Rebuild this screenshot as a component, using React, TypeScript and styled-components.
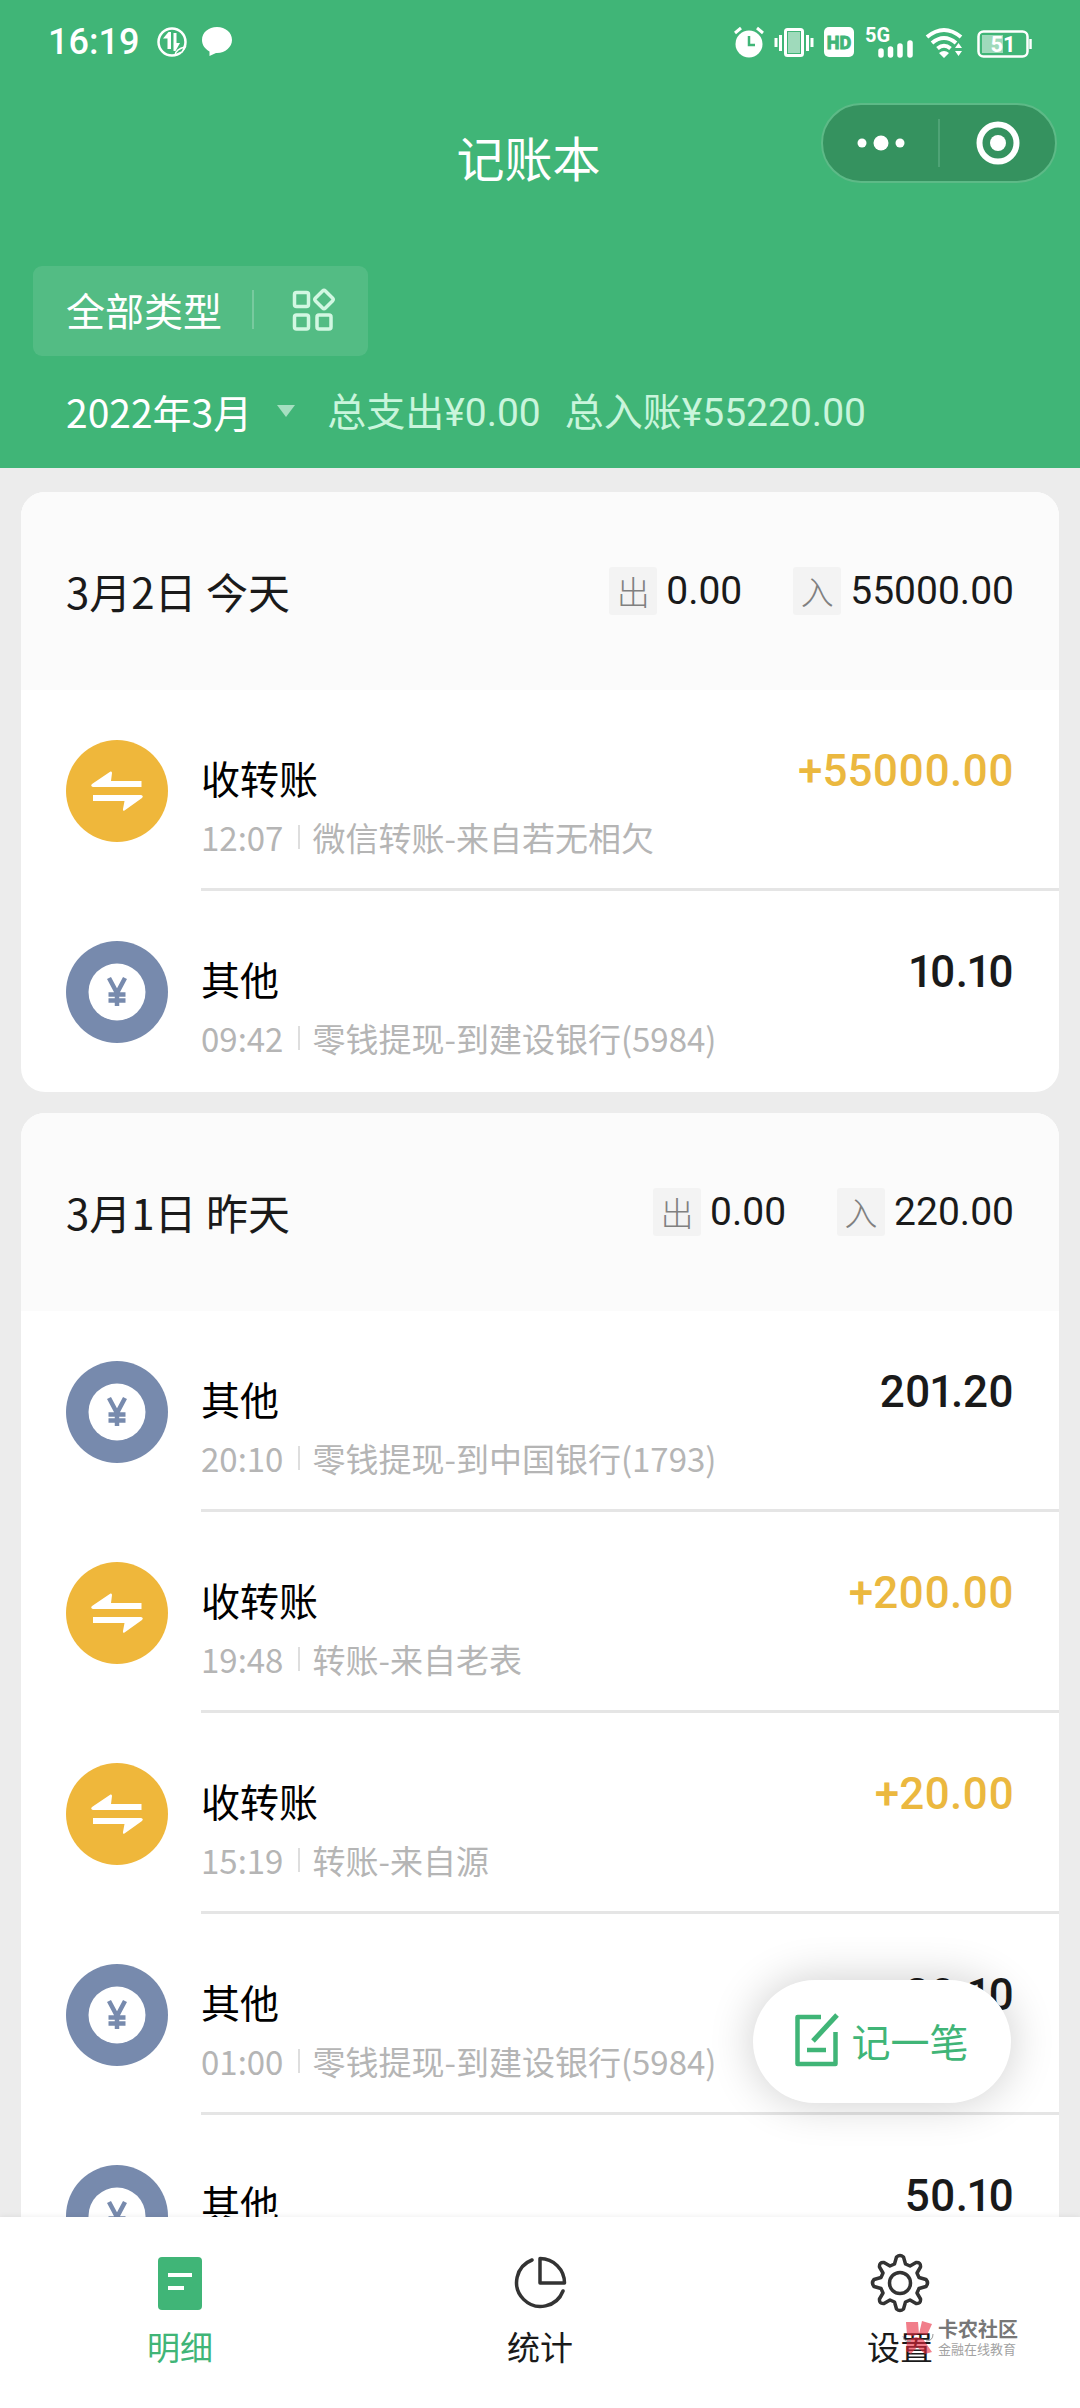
import React from "react";
import styled, { createGlobalStyle } from "styled-components";

const cjk = '"Noto Sans CJK SC", sans-serif';
const numeric = 'Roboto, "Noto Sans CJK SC", sans-serif';
const green = "#40b577";

const GlobalStyle = createGlobalStyle`
  *, *::before, *::after { box-sizing: border-box; }
  html, body { margin: 0; height: 100%; }
  #root { height: 100%; }
  body { background: #ececec; font-family: ${cjk}; color: #1a1a1a; }
  button { border: 0; padding: 0; background: none; font: inherit; color: inherit; }
  h1, h2, h3, p, ul { margin: 0; padding: 0; font-weight: inherit; }
  ul { list-style: none; }
  svg { display: block; flex: none; overflow: visible; }
`;

const Screen = styled.div`
  position: relative;
  display: flex;
  flex-direction: column;
  height: 100vh;
  overflow: hidden;
`;

const Header = styled.header`
  flex: none;
  background: ${green};
  color: #fff;
  padding-bottom: 26px;
`;

const StatusBar = styled.div`
  display: flex;
  justify-content: space-between;
  align-items: center;
  height: 84px;
  padding: 0 48px;
`;

const StatusGroup = styled.div`
  display: flex;
  align-items: center;
  gap: 18px;
`;

const Clock = styled.time`
  font: 500 36px/1 ${numeric};
`;

const NavBar = styled.div`
  display: grid;
  grid-template-columns: 1fr auto 1fr;
  align-items: center;
  height: 118px;
  padding: 0 23px 0 0;
`;

const Title = styled.h1`
  grid-column: 2;
  padding-top: 26px;
  font-size: 48px;
  line-height: 64px;
`;

const Capsule = styled.div`
  grid-column: 3;
  justify-self: end;
  display: flex;
  align-items: center;
  width: 236px;
  height: 80px;
  border: 2px solid #5dba87;
  border-radius: 40px;
  background: #35925f;
`;

const CapsuleButton = styled.button`
  flex: 1;
  display: flex;
  justify-content: center;
  align-items: center;
  height: 48px;
  & + & { border-left: 2px solid #4fa376; }
`;

const Filter = styled.button`
  display: flex;
  align-items: center;
  height: 90px;
  margin: 64px 0 0 33px;
  padding: 0 34px 3px 33px;
  border-radius: 9px;
  background: rgba(255, 255, 255, 0.1);
  font-size: 39px;
  line-height: 57px;
`;

const FilterRule = styled.span`
  width: 2px;
  height: 39px;
  margin: 0 38px 0 30px;
  background: rgba(255, 255, 255, 0.22);
`;

const Summary = styled.div`
  display: flex;
  align-items: flex-start;
  margin-top: 28px;
  padding: 0 66px;
  font-size: 39px;
  line-height: 58px;
`;

const MonthButton = styled.button`
  display: flex;
  align-items: center;
  gap: 25px;
  margin-right: 32px;
  line-height: 54px;
`;

const Total = styled.p`
  margin-right: 24px;
  font-family: ${numeric};
  color: #c9f5dc;
`;

const List = styled.main`
  flex: 1;
  min-height: 0;
  overflow: hidden;
  display: flex;
  flex-direction: column;
  gap: 21px;
  padding: 24px 21px 0;
`;

const Card = styled.section`
  flex: none;
  border-radius: 24px;
  background: #fff;
  overflow: hidden;
`;

const DayHeader = styled.div`
  display: flex;
  align-items: center;
  height: 198px;
  padding: 0 45px;
  background: #fbfbfb;
`;

const Day = styled.h2`
  flex: 1;
  font-size: 42px;
  line-height: 60px;
`;

const Flow = styled.p`
  display: flex;
  align-items: center;
  gap: 9px;
  margin-left: 51px;
  font: 400 39px/48px ${numeric};
`;

const Chip = styled.span`
  width: 48px;
  height: 48px;
  border-radius: 3px;
  background: #f3f3f3;
  color: #808080;
  font: 300 33px/48px ${cjk};
  text-align: center;
`;

const Row = styled.li`
  display: flex;
  gap: 33px;
  height: 201px;
  padding-left: 45px;
`;

const RowIcon = styled.svg`
  width: 102px;
  height: 102px;
  margin-top: 50px;
`;

const RowBody = styled.div`
  flex: 1;
  display: flex;
  justify-content: space-between;
  padding-right: 45px;
  border-bottom: 3px solid #e5e5e5;
  ${Row}:last-child & { border-bottom-color: transparent; }
`;

const RowTitle = styled.h3`
  padding-top: 58px;
  color: #000;
  font-size: 39px;
  line-height: 58px;
`;

const Detail = styled.p`
  display: flex;
  align-items: center;
  margin-top: 7px;
  color: #b5b5b5;
  font-size: 33px;
  line-height: 48px;
`;

const DetailRule = styled.span`
  width: 2px;
  height: 24px;
  margin: 0 12px 0 15px;
  background: #dedede;
`;

const Amount = styled.strong<{ $income: boolean }>`
  padding-top: 54px;
  color: ${(p) => (p.$income ? "#ebb83f" : "#1a1a1a")};
  font: 500 44px/54px ${numeric};
  font-variant-numeric: proportional-nums;
`;

const AddButton = styled.button`
  position: absolute;
  right: 69px;
  bottom: 305px;
  display: flex;
  align-items: center;
  justify-content: center;
  gap: 12px;
  width: 258px;
  height: 123px;
  padding-bottom: 3px;
  border-radius: 62px;
  background: #fff;
  box-shadow: 0 0 45px rgba(0, 0, 0, 0.2);
  color: ${green};
  font-size: 39px;
  line-height: 58px;
`;

const TabBar = styled.nav`
  position: relative;
  flex: none;
  display: grid;
  grid-template-columns: repeat(3, 1fr);
  height: 191px;
  background: #fff;
  box-shadow: 0 0 6px rgba(0, 0, 0, 0.08);
`;

const Tab = styled.a<{ $active?: boolean }>`
  display: flex;
  flex-direction: column;
  align-items: center;
  gap: 9px;
  padding-top: 36px;
  color: ${(p) => (p.$active ? green : "#1a1a1a")};
  font-size: 33px;
  line-height: 48px;
  text-decoration: none;
`;

const Watermark = styled.div`
  position: absolute;
  right: 62px;
  bottom: 50px;
  display: flex;
  align-items: center;
  gap: 3px;
`;

const WatermarkName = styled.p`
  color: #777;
  font-size: 20px;
  font-weight: 700;
  line-height: 22px;
`;

const WatermarkNote = styled.p`
  color: #a2a2a2;
  font-size: 13px;
  line-height: 18px;
`;

function TransferIcon() {
  return (
    <RowIcon viewBox="0 0 102 102" aria-hidden="true">
      <circle cx="51" cy="51" r="51" fill="#efb73b" />
      <path d="M26 44 44.500 31.500Q46 31 46 33L45 41H75.500V47H27Q24 46 26 44Z" fill="#fff" />
      <path d="M76 58 58.500 70.500Q56.500 71.500 57 69L58.500 61H27V55H75Q78 56 76 58Z" fill="#fff" />
    </RowIcon>
  );
}

function YuanIcon() {
  return (
    <RowIcon viewBox="0 0 102 102" aria-hidden="true">
      <circle cx="51" cy="51" r="51" fill="#778aad" />
      <circle cx="51" cy="51" r="28.500" fill="#fff" />
      <path d="M43 37 51 52 59 37M42.500 53.500H59.500M42.500 59.500H59.500M51 51V65" fill="none" stroke="#778aad" strokeWidth="4.500" />
    </RowIcon>
  );
}

function LeftStatusIcons() {
  return (
    <svg width="76" height="32" viewBox="0 0 76 32" aria-hidden="true">
      <circle cx="15" cy="16" r="13.500" fill="none" stroke="#fff" strokeWidth="2.500" />
      <path d="M6 12.500 11.500 6H14V23H10.500V12.500ZM16.500 7H19.500V17H23L18.500 25H16.500Z" fill="#fff" />
      <path d="M18 29Q19 23 28 21L25 26Z" fill={green} stroke="#fff" strokeWidth="1.500" />
      <path d="M60 1C51.500 1 45 6.500 45 14 45 19 48 23 52.500 25.500V30L59 27C68 27.500 75 21 75 14 75 6.500 68.500 1 60 1Z" fill="#fff" />
    </svg>
  );
}

const StatusText = styled.text`
  font-family: Roboto, sans-serif;
  font-weight: 700;
`;

function RightStatusIcons() {
  return (
    <svg width="298" height="32" viewBox="0 0 298 32" fill="#fff" aria-hidden="true">
      <circle cx="15" cy="18" r="13.500" />
      <path d="M15 10V19H21" fill="none" stroke={green} strokeWidth="2.500" />
      <path d="M1 7 7 2M29 7 23 2" stroke="#fff" strokeWidth="3" />
      <rect x="51.500" y="3.500" width="17" height="26" rx="2" fill="#9fdabb" stroke="#fff" strokeWidth="3" />
      <rect x="53.500" y="5.500" width="13" height="22" fill="none" stroke={green} strokeWidth="1" />
      <path d="M46.500 9V25M42 12V21M73.500 9V25M78 12V21" stroke="#fff" strokeWidth="3" />
      <rect x="90" y="1" width="30" height="30" rx="5" />
      <StatusText x="105" y="23" fontSize="18" fill={green} stroke={green} textAnchor="middle">HD</StatusText>
      <StatusText x="131" y="16" fontSize="20">5G</StatusText>
      <path d="M147 25V29M156.500 23V29M166 20V29M176 17V29" stroke="#fff" strokeWidth="5.500" strokeLinecap="round" />
      <path d="M193 11Q210 -3 227 11M198 17Q210 7 222 17M203.500 22.500Q210 17 216.500 22.500" fill="none" stroke="#fff" strokeWidth="4" />
      <path d="M205 27Q210 23 215 27L210 32ZM221 22 224.500 17 228 22ZM221 25H228L224.500 30Z" />
      <rect x="244.500" y="5.500" width="49" height="25" rx="5" fill="none" stroke="#fff" strokeWidth="2.500" />
      <rect x="248" y="9" width="21" height="18" fill="#9fdabb" />
      <path d="M296.500 13V23" stroke="#fff" strokeWidth="2.500" />
      <StatusText x="269" y="26" fontSize="22" textAnchor="middle">51</StatusText>
    </svg>
  );
}

type Entry = { income: boolean; title: string; time: string; note: string; amount: string };
type DayGroup = { day: string; out: string; in: string; entries: Entry[] };

const other = (time: string, note: string, amount: string): Entry => ({ income: false, title: "其他", time, note, amount });
const received = (time: string, note: string, amount: string): Entry => ({ income: true, title: "收转账", time, note, amount });

const days: DayGroup[] = [
  {
    day: "3月2日 今天",
    out: "0.00",
    in: "55000.00",
    entries: [
      received("12:07", "微信转账-来自若无相欠", "+55000.00"),
      other("09:42", "零钱提现-到建设银行(5984)", "10.10"),
    ],
  },
  {
    day: "3月1日 昨天",
    out: "0.00",
    in: "220.00",
    entries: [
      other("20:10", "零钱提现-到中国银行(1793)", "201.20"),
      received("19:48", "转账-来自老表", "+200.00"),
      received("15:19", "转账-来自源", "+20.00"),
      other("01:00", "零钱提现-到建设银行(5984)", "20.10"),
      other("", "", "50.10"),
    ],
  },
];

function EntryRow({ entry }: { entry: Entry }) {
  return (
    <Row>
      {entry.income ? <TransferIcon /> : <YuanIcon />}
      <RowBody>
        <div>
          <RowTitle>{entry.title}</RowTitle>
          {entry.time && (
            <Detail>
              {entry.time}
              <DetailRule />
              {entry.note}
            </Detail>
          )}
        </div>
        <Amount $income={entry.income}>{entry.amount}</Amount>
      </RowBody>
    </Row>
  );
}

export default function App() {
  return (
    <Screen>
      <GlobalStyle />
      <Header>
        <StatusBar>
          <StatusGroup>
            <Clock>16:19</Clock>
            <LeftStatusIcons />
          </StatusGroup>
          <RightStatusIcons />
        </StatusBar>
        <NavBar>
          <Title>记账本</Title>
          <Capsule>
            <CapsuleButton aria-label="更多">
              <svg width="50" height="16" viewBox="0 0 50 16" fill="#fff">
                <circle cx="6" cy="8" r="4.500" />
                <circle cx="25" cy="8" r="7.500" />
                <circle cx="44" cy="8" r="4.500" />
              </svg>
            </CapsuleButton>
            <CapsuleButton aria-label="关闭">
              <svg width="44" height="44" viewBox="0 0 44 44" fill="#fff">
                <circle cx="22" cy="22" r="18.500" fill="none" stroke="#fff" strokeWidth="6" />
                <circle cx="22" cy="22" r="8" />
              </svg>
            </CapsuleButton>
          </Capsule>
        </NavBar>
        <Filter>
          全部类型
          <FilterRule />
          <svg width="42" height="42" viewBox="0 0 42 42" fill="none" stroke="#d2f7e2" strokeWidth="3.500">
            <rect x="2.500" y="3.500" width="14" height="14" rx="2" />
            <rect x="2.500" y="26" width="14" height="14" rx="2" />
            <rect x="25" y="26" width="14" height="14" rx="2" />
            <rect x="25" y="3.500" width="14" height="14" rx="2" transform="rotate(45 32 10.500)" />
          </svg>
        </Filter>
        <Summary>
          <MonthButton>
            2022年3月
            <svg width="18" height="12" viewBox="0 0 18 12">
              <path d="M0 0H18L9 12Z" fill="#a5dfc0" />
            </svg>
          </MonthButton>
          <Total>总支出¥0.00</Total>
          <Total>总入账¥55220.00</Total>
        </Summary>
      </Header>

      <List>
        {days.map((group) => (
          <Card key={group.day}>
            <DayHeader>
              <Day>{group.day}</Day>
              <Flow><Chip>出</Chip>{group.out}</Flow>
              <Flow><Chip>入</Chip>{group.in}</Flow>
            </DayHeader>
            <ul>
              {group.entries.map((entry) => <EntryRow key={entry.time} entry={entry} />)}
            </ul>
          </Card>
        ))}
      </List>

      <AddButton>
        <svg width="44" height="54" viewBox="0 0 44 54" fill="none" stroke={green} strokeWidth="4.500" strokeLinejoin="round">
          <path d="M26 4H2.500V51H40.500V19" />
          <path d="M42 2 18 28" strokeWidth="5" />
          <path d="M12 37H31" />
        </svg>
        记一笔
      </AddButton>

      <TabBar>
        <Tab href="#detail" $active>
          <svg width="60" height="60" viewBox="0 0 60 60">
            <rect x="8" y="4" width="44" height="53" rx="4" fill={green} />
            <path d="M18 22H42M18 35H34" stroke="#fff" strokeWidth="4" />
          </svg>
          明细
        </Tab>
        <Tab href="#stats">
          <svg width="60" height="60" viewBox="0 0 60 60" fill="none" stroke="#333" strokeWidth="3.500" strokeLinecap="round" strokeLinejoin="round">
            <path d="M22 7A24 24 0 1 0 53 38" />
            <path d="M30 5.500V30H54.500A24.500 24.500 0 0 0 30 5.500Z" />
          </svg>
          统计
        </Tab>
        <Tab href="#settings">
          <svg width="60" height="60" viewBox="0 0 60 60" fill="none" stroke="#333" strokeWidth="3.500" strokeLinejoin="round">
            <circle cx="30" cy="30" r="10.500" />
            <path d="M26.500 4Q30 1 33.500 4L35.500 11 40 13 46 9.500Q51 9 50.500 14L47 20 49 24.500 56 26.500Q59 30 56 33.500L49 35.500 47 40 50.500 46Q51 51 46 50.500L40 47 35.500 49 33.500 56Q30 59 26.500 56L24.500 49 20 47 14 50.500Q9 51 9.500 46L13 40 11 35.500 4 33.500Q1 30 4 26.500L11 24.500 13 20 9.500 14Q9 9 14 9.500L20 13 24.500 11Z" />
          </svg>
          设置
        </Tab>
        <Watermark>
          <svg width="34" height="34" viewBox="0 0 34 34" fill="#e8283c" fillOpacity="0.600">
            <path d="M5 1H17L18 13 12 15 6 14Z" />
            <path d="M21 0 31 3 26 14 18 13Z" />
            <path d="M6 19 15 16 22 18 31 31 24 33 16 26 10 33 5 30Z" />
            <path d="M2 15Q3 22 10 20M25 20Q32 20 32 13" fill="none" stroke="#999" strokeWidth="1" />
          </svg>
          <div>
            <WatermarkName>卡农社区</WatermarkName>
            <WatermarkNote>金融在线教育</WatermarkNote>
          </div>
        </Watermark>
      </TabBar>
    </Screen>
  );
}
